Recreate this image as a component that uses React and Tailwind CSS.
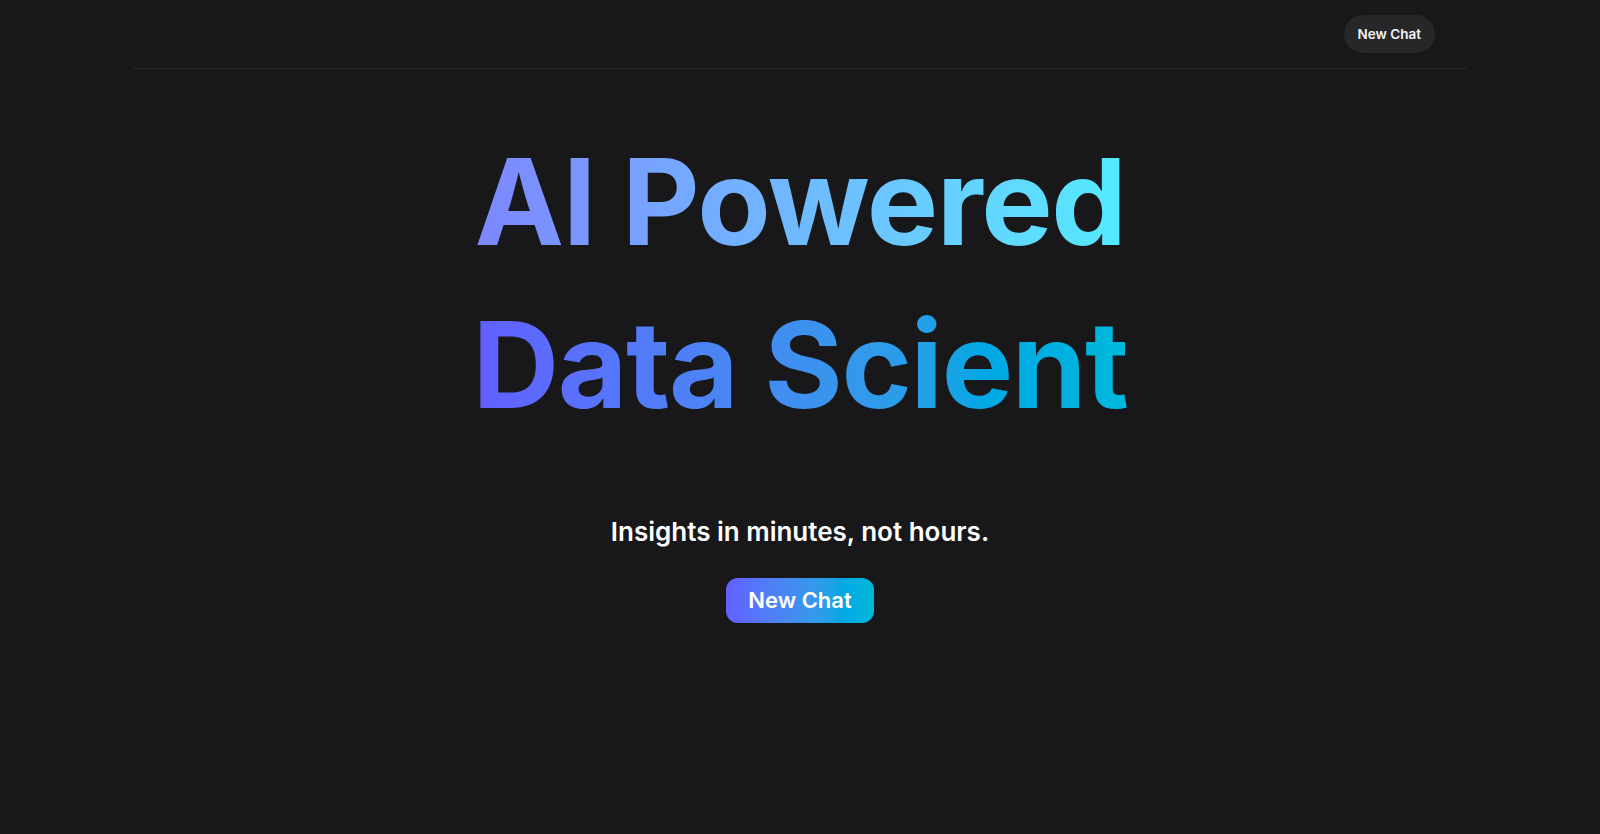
import React from 'react';

function Header() {
  return (
    <div className="max-w-[1334px] mx-auto border-b border-[#27272a] flex items-center justify-end px-8 py-[15px]">
      <button className="h-[38px] px-[14px] rounded-full bg-[#27272a] text-[13.5px] font-semibold text-zinc-100 hover:bg-zinc-700 transition">
        New Chat
      </button>
    </div>
  );
}

function App() {
  return (
    <div className="min-h-screen bg-[#18181b] text-white font-['Inter','Noto_Sans',sans-serif]">
      <Header />

      {/* Hero */}
      <main className="flex flex-col items-center pt-[51px]">
        <h1 className="flex flex-col items-center text-[120px] leading-[163px] font-bold tracking-[-0.012em]">
          <span className="bg-linear-to-r from-indigo-400 to-cyan-300 bg-clip-text text-transparent">AI Powered</span>
          <span className="bg-linear-to-r from-indigo-500 to-cyan-500 bg-clip-text text-transparent">Data Scient</span>
        </h1>

        <p className="mt-[68px] text-[26px] leading-[36px] font-semibold text-white">
          Insights in minutes, not hours.
        </p>

        <button className="mt-7 h-[45px] px-[22px] rounded-xl bg-linear-to-r from-indigo-500 to-cyan-500 text-[22px] font-semibold text-white">
          New Chat
        </button>
      </main>
    </div>
  );
}

export default App;
